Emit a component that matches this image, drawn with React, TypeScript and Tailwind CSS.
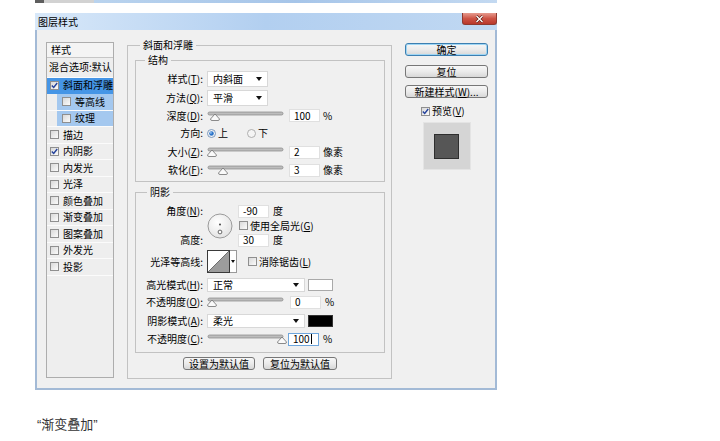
import React from 'react';

// Small building blocks of the Win7 style dialog
const Check = ({ on = false }: { on?: boolean }) => (
  <span className="inline-flex h-[9px] w-[9px] shrink-0 items-center justify-center border border-[#8f8f8f] bg-linear-to-br from-[#d9d9d9] to-[#fbfbfb]">
    {on && (
      <svg width="7" height="7" viewBox="0 0 7 7">
        <path d="M0.8 3.4 L2.7 5.4 L6.2 1" fill="none" stroke="#23419b" strokeWidth="1.4" />
      </svg>
    )}
  </span>
);

const Radio = ({ on = false }: { on?: boolean }) => (
  <svg width="9" height="9" viewBox="0 0 9 9" className="shrink-0">
    <circle cx="4.5" cy="4.5" r="4" fill="#f4f4f4" stroke={on ? '#6f8fb5' : '#a6a6a6'} strokeWidth="0.9" />
    {on && <circle cx="4.5" cy="4.5" r="2.3" fill="#2c74c8" />}
    {on && <circle cx="3.9" cy="3.9" r="0.8" fill="#a9d4ff" />}
  </svg>
);

const Select = ({ w, text }: { w: string; text: string }) => (
  <div className={`${w} flex h-full items-center justify-between border border-[#d8d8d8] bg-white pl-[5px] pr-[5px]`}>
    <span>{text}</span>
    <svg width="6" height="4" viewBox="0 0 6 4">
      <path d="M0 0 H6 L3 4 Z" fill="#111" />
    </svg>
  </div>
);

// track with a small pointer hanging below it
const Slider = ({ pos }: { pos: number }) => (
  <svg width="80" height="12" viewBox="0 0 80 12" className="shrink-0">
    <rect x="1" y="2" width="75" height="3" rx="1.5" fill="#bdbdbd" stroke="#858585" strokeWidth="0.7" />
    <path
      d={`M${pos} 4 L${pos + 4.5} 9 Q${pos + 4.5} 10.5 ${pos + 3} 10.5 L${pos - 3} 10.5 Q${pos - 4.5} 10.5 ${pos - 4.5} 9 Z`}
      fill="#fafafa"
      stroke="#6f6f6f"
      strokeWidth="0.8"
    />
  </svg>
);

const Field = ({ value, focus = false }: { value: string; focus?: boolean }) => (
  <div
    className={`flex h-[13px] w-[31px] items-center border bg-white pl-[4px] ${
      focus ? 'border-[#6ea6dc]' : 'border-[#e0e0e0]'
    }`}
  >
    {value}
    {focus && <span className="ml-[1px] h-[10px] w-px bg-black" />}
  </div>
);

const Btn = ({ children, w, main = false }: { children: React.ReactNode; w: string; main?: boolean }) => (
  <div
    className={`${w} flex h-[13px] items-center justify-center rounded-[3px] border bg-linear-to-b from-[#f7f7f7] via-[#ebebeb] to-[#d8d8d8] ${
      main ? 'border-[#3c7fb1] shadow-[inset_0_0_0_1px_#9fd6f4]' : 'border-[#777]'
    }`}
  >
    {children}
  </div>
);

const Lbl = ({ children }: { children: React.ReactNode }) => (
  <span className="w-[67px] shrink-0 text-right whitespace-nowrap">{children}</span>
);

type Item = { name: string; on?: boolean; sub?: boolean; sel?: boolean };

const items: Item[] = [
  { name: '斜面和浮雕', on: true, sel: true },
  { name: '等高线', sub: true },
  { name: '纹理', sub: true },
  { name: '描边' },
  { name: '内阴影', on: true },
  { name: '内发光' },
  { name: '光泽' },
  { name: '颜色叠加' },
  { name: '渐变叠加' },
  { name: '图案叠加' },
  { name: '外发光' },
  { name: '投影' },
];

export default function App() {
  return (
    <div className="h-[441px] w-[720px] overflow-hidden bg-white font-['Noto_Sans_CJK_SC',sans-serif] text-[10px] leading-[12px] text-black">
      {/* edge of the picture above */}
      <div className="ml-[35px] flex h-[3px] w-[462px]">
        <div className="w-[9px] bg-[#5e5e5e]" />
        <div className="w-[50px] bg-[#d2d2d2]" />
        <div className="flex-1 bg-linear-to-r from-[#b9d3ee] via-[#a6c5e9] to-[#c3d9f1]" />
      </div>

      <div className="ml-[35px] mt-[10px] w-[462px]">
        {/* title bar */}
        <div className="flex h-[17px] items-start justify-between bg-linear-to-r from-[#d8e8f9] via-[#b2cff0] to-[#c0d8f2]">
          <span className="self-center pl-[3px]">图层样式</span>
          <div className="flex h-[12px] w-[35px] items-center justify-center rounded-b-[3px] border border-t-0 border-[#8e3a30] bg-linear-to-b from-[#e59a8e] via-[#cd5446] to-[#b9382b]">
            <svg width="9" height="8" viewBox="0 0 9 8">
              <path d="M1.5 1 L7.5 7 M7.5 1 L1.5 7" stroke="#5a1a12" strokeWidth="2.6" />
              <path d="M1.5 1 L7.5 7 M7.5 1 L1.5 7" stroke="#fff" strokeWidth="1.4" />
            </svg>
          </div>
        </div>

        {/* body */}
        <div className="flex h-[360px] items-start border-x-2 border-b-2 border-[#a3bad6] bg-[#f0f0f0] pl-[9px] pt-[12px]">
          {/* style list */}
          <div className="h-[336px] w-[68px] shrink-0 border border-[#adadad] bg-[#eeeeee]">
            <div className="flex h-[15px] items-center border-b border-[#c6c6c6] bg-[#f4f4f4] pl-[4px]">样式</div>
            <div className="flex h-[19.5px] items-center border-b border-[#fbfbfb] pl-[2px] whitespace-nowrap">混合选项:默认</div>
            {items.map((it) =>
              it.sub ? (
                <div key={it.name} className="flex h-[16.5px] border-b border-[#fbfbfb] pl-[10px]">
                  <div className="flex flex-1 items-center gap-[4px] bg-[#a4c8ef] pl-[5px]">
                    <Check on={it.on} />
                    <span>{it.name}</span>
                  </div>
                </div>
              ) : (
                <div
                  key={it.name}
                  className={`flex h-[16.5px] items-center gap-[4px] border-b pl-[3px] ${
                    it.sel ? 'border-[#4595e6] bg-[#4595e6]' : 'border-[#fbfbfb]'
                  }`}
                >
                  <Check on={it.on} />
                  <span>{it.name}</span>
                </div>
              )
            )}
          </div>

          {/* bevel and emboss */}
          <div className="ml-[13px] flex w-[265px] shrink-0 flex-col">
            <fieldset className="mt-[-3px] h-[340px] border border-[#c2c2c2] pl-[7px] pr-[6px]">
              <legend className="ml-[5px] px-[3px] leading-[12px]">斜面和浮雕</legend>

              <fieldset className="mt-[3px] h-[128px] border border-[#c2c2c2]">
                <legend className="ml-[9px] px-[3px] leading-[12px]">结构</legend>
                <div className="mt-[5px] flex h-[16px] items-center">
                  <Lbl>样式(<u>T</u>):</Lbl>
                  <div className="ml-[4px] h-full">
                    <Select w="w-[61px]" text="内斜面" />
                  </div>
                </div>
                <div className="mt-[3px] flex h-[16px] items-center">
                  <Lbl>方法(<u>Q</u>):</Lbl>
                  <div className="ml-[4px] h-full">
                    <Select w="w-[61px]" text="平滑" />
                  </div>
                </div>
                <div className="mt-[2px] flex h-[15px] items-center">
                  <Lbl>深度(<u>D</u>):</Lbl>
                  <div className="ml-[4px] flex items-center">
                    <Slider pos={8} />
                    <div className="ml-[2px]"><Field value="100" /></div>
                    <span className="ml-[3px]">%</span>
                  </div>
                </div>
                <div className="mt-[2px] flex h-[16px] items-center">
                  <Lbl>方向:</Lbl>
                  <div className="ml-[4px] flex items-center">
                    <Radio on />
                    <span className="ml-[2px]">上</span>
                    <span className="ml-[19px]"><Radio /></span>
                    <span className="ml-[2px]">下</span>
                  </div>
                </div>
                <div className="mt-[3px] flex h-[16px] items-center">
                  <Lbl>大小(<u>Z</u>):</Lbl>
                  <div className="ml-[4px] flex items-center">
                    <Slider pos={5} />
                    <div className="ml-[2px]"><Field value="2" /></div>
                    <span className="ml-[3px]">像素</span>
                  </div>
                </div>
                <div className="mt-[2px] flex h-[16px] items-center">
                  <Lbl>软化(<u>F</u>):</Lbl>
                  <div className="ml-[4px] flex items-center">
                    <Slider pos={16} />
                    <div className="ml-[2px]"><Field value="3" /></div>
                    <span className="ml-[3px]">像素</span>
                  </div>
                </div>
              </fieldset>

              <fieldset className="mt-[4px] h-[167px] border border-[#c2c2c2]">
                <legend className="ml-[11px] px-[3px] leading-[12px]">阴影</legend>

                <div className="mt-[6px] flex h-[43px]">
                  <div className="flex w-[67px] flex-col justify-between">
                    <span className="flex h-[14px] items-center justify-end">角度(<u>N</u>):</span>
                    <span className="flex h-[14px] items-center justify-end">高度:</span>
                  </div>
                  <svg width="26" height="26" viewBox="0 0 26 26" className="ml-[4px] self-center">
                    <defs>
                      <radialGradient id="dial" cx="40%" cy="35%" r="70%">
                        <stop offset="0%" stopColor="#ffffff" />
                        <stop offset="100%" stopColor="#e2e2e2" />
                      </radialGradient>
                    </defs>
                    <circle cx="13" cy="13" r="12" fill="url(#dial)" stroke="#9b9b9b" strokeWidth="1" />
                    <circle cx="13" cy="11.5" r="0.9" fill="#333" />
                    <circle cx="13" cy="19" r="1.9" fill="#fff" stroke="#444" strokeWidth="0.8" />
                  </svg>
                  <div className="ml-[5px] flex flex-col">
                    <div className="flex h-[14px] items-center">
                      <Field value="-90" />
                      <span className="ml-[4px]">度</span>
                    </div>
                    <div className="flex h-[15px] items-center gap-[2px] pl-[1px]">
                      <Check />
                      <span>使用全局光(<u>G</u>)</span>
                    </div>
                    <div className="flex h-[14px] items-center">
                      <Field value="30" />
                      <span className="ml-[4px]">度</span>
                    </div>
                  </div>
                </div>

                <div className="mt-[3px] flex h-[23px] items-center">
                  <Lbl>光泽等高线:</Lbl>
                  <div className="ml-[4px] flex h-full">
                    <div className="h-[23px] w-[23px] border border-[#3a3a3a] bg-white">
                      <svg width="21" height="21" viewBox="0 0 21 21">
                        <path d="M0 21 L21 0 L21 21 Z" fill="#9c9c9c" />
                        <path d="M0 21 L21 0" stroke="#555" strokeWidth="0.8" />
                      </svg>
                    </div>
                    <div className="flex w-[7px] items-center justify-center border border-l-0 border-[#9a9a9a] bg-white">
                      <svg width="4" height="3" viewBox="0 0 4 3">
                        <path d="M0 0 H4 L2 3 Z" fill="#111" />
                      </svg>
                    </div>
                  </div>
                  <div className="ml-[11px] flex items-center gap-[2px]">
                    <Check />
                    <span>消除锯齿(<u>L</u>)</span>
                  </div>
                </div>

                <div className="mt-[5px] flex h-[14px] items-center">
                  <Lbl>高光模式(<u>H</u>):</Lbl>
                  <div className="ml-[4px] h-full">
                    <Select w="w-[98px]" text="正常" />
                  </div>
                  <div className="ml-[3px] h-[12px] w-[25px] border border-[#a9a9a9] bg-white" />
                </div>
                <div className="mt-[3px] flex h-[14px] items-center">
                  <Lbl>不透明度(<u>O</u>):</Lbl>
                  <div className="ml-[4px] flex items-center">
                    <Slider pos={5} />
                    <div className="ml-[3px]"><Field value="0" /></div>
                    <span className="ml-[4px]">%</span>
                  </div>
                </div>
                <div className="mt-[5px] flex h-[14px] items-center">
                  <Lbl>阴影模式(<u>A</u>):</Lbl>
                  <div className="ml-[4px] h-full">
                    <Select w="w-[98px]" text="柔光" />
                  </div>
                  <div className="ml-[3px] h-[12px] w-[25px] border border-[#333] bg-black" />
                </div>
                <div className="mt-[4px] flex h-[14px] items-center">
                  <Lbl>不透明度(<u>C</u>):</Lbl>
                  <div className="ml-[4px] flex items-center">
                    <Slider pos={75} />
                    <div className="ml-[1px]"><Field value="100" focus /></div>
                    <span className="ml-[4px]">%</span>
                  </div>
                </div>
              </fieldset>

              <div className="mt-[4px] flex justify-center gap-[8px]">
                <Btn w="w-[72px]">设置为默认值</Btn>
                <Btn w="w-[74px]">复位为默认值</Btn>
              </div>
            </fieldset>
          </div>

          {/* buttons and preview */}
          <div className="ml-[13px] flex w-[83px] shrink-0 flex-col">
            <div className="mt-[1px]">
              <Btn w="w-[83px]" main>确定</Btn>
            </div>
            <div className="mt-[9px]">
              <Btn w="w-[83px]">复位</Btn>
            </div>
            <div className="mt-[7px]">
              <Btn w="w-[83px]">新建样式(<u>W</u>)...</Btn>
            </div>
            <div className="mt-[7px] flex h-[12px] items-center gap-[2px] pl-[16px]">
              <Check on />
              <span>预览(<u>V</u>)</span>
            </div>
            <div className="mt-[5px] flex h-[48px] w-[48px] items-center justify-center self-center border border-[#e4e4e4] bg-[#d5d5d5]">
              <div className="h-[25px] w-[25px] border border-[#2e2e2e] bg-[#565656]" />
            </div>
          </div>
        </div>
      </div>

      <div className="mt-[25px] pl-[37px] text-[13px] leading-[18px] text-[#333]">
        <span className="font-['Liberation_Sans',sans-serif]">“</span>渐变叠加
        <span className="font-['Liberation_Sans',sans-serif]">”</span>
      </div>
    </div>
  );
}
